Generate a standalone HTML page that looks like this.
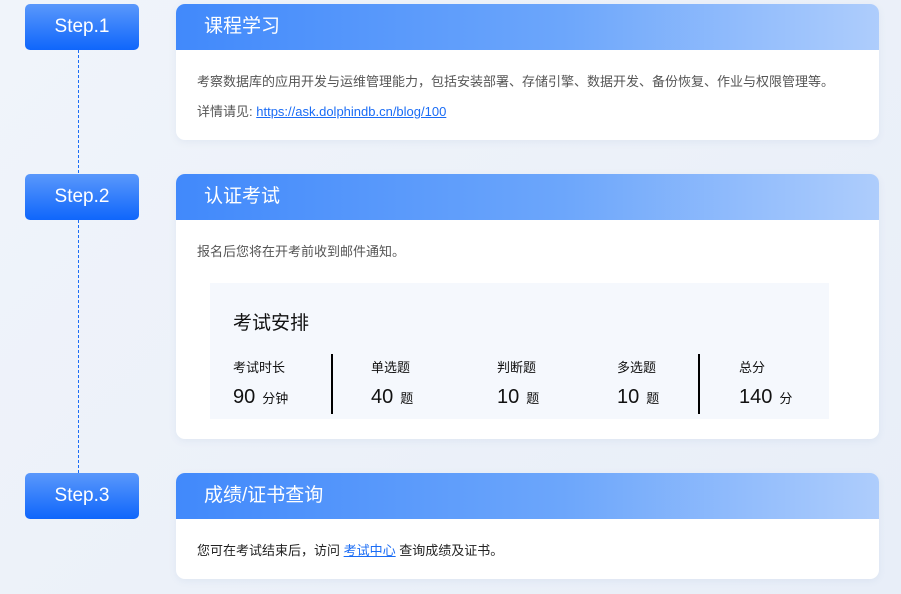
<!DOCTYPE html>
<html><head><meta charset="utf-8"><style>
*{margin:0;padding:0;box-sizing:border-box}
body{width:901px;height:594px;overflow:hidden;background:linear-gradient(135deg,#f0f4fa,#e8eef8);font-family:"Liberation Sans","Noto Sans CJK SC",sans-serif;position:relative}
.step{position:absolute;left:25px;width:114px;height:46px;border-radius:5px;background:linear-gradient(#5a98fb,#0f66fb);color:#fff;font-size:19px;text-align:center;line-height:45px}
.line{position:absolute;left:78px;top:50px;height:423px;border-left:1px dashed #1a6cf5}
.card{position:absolute;left:176px;width:703px;background:#fff;border-radius:9px;overflow:hidden;box-shadow:0 2px 8px rgba(80,110,170,.08)}
.hd{height:46px;background:linear-gradient(90deg,#4189fb 0%,#6ca6fb 55%,#aecdfc 100%);color:#fff;font-size:19px;line-height:46px;padding-left:28px}
.t{font-size:13px;color:#555;position:absolute;left:21px}
a{color:#1a6cf5;text-decoration:underline}
.sch{position:absolute;left:34px;top:109px;width:619px;height:136px;background:#f5f8fd}
.c{position:absolute;color:#111}
.lb{font-size:13px;top:74px}
.v{font-size:20px;top:103px}
.v small{font-size:13px;margin-left:7px}
.dv{position:absolute;top:71px;height:60px;border-left:2px solid #000}
</style></head><body>
<div class="line"></div>
<div class="step" style="top:4px">Step.1</div>
<div class="step" style="top:174px">Step.2</div>
<div class="step" style="top:473px">Step.3</div>
<div class="card" style="top:4px;height:136px">
<div class="hd">课程学习</div>
<div class="t" style="top:67px">考察数据库的应用开发与运维管理能力，包括安装部署、存储引擎、数据开发、备份恢复、作业与权限管理等。</div>
<div class="t" style="top:97px">详情请见: <a>https://ask.dolphindb.cn/blog/100</a></div>
</div>
<div class="card" style="top:174px;height:265px">
<div class="hd">认证考试</div>
<div class="t" style="top:67px">报名后您将在开考前收到邮件通知。</div>
<div class="sch">
<div class="c" style="left:23px;top:25px;font-size:19px">考试安排</div>
<div class="c lb" style="left:23px">考试时长</div><div class="c v" style="left:23px">90<small>分钟</small></div>
<div class="dv" style="left:121px"></div>
<div class="c lb" style="left:161px">单选题</div><div class="c v" style="left:161px">40<small>题</small></div>
<div class="c lb" style="left:287px">判断题</div><div class="c v" style="left:287px">10<small>题</small></div>
<div class="c lb" style="left:407px">多选题</div><div class="c v" style="left:407px">10<small>题</small></div>
<div class="dv" style="left:488px"></div>
<div class="c lb" style="left:529px">总分</div><div class="c v" style="left:529px">140<small>分</small></div>
</div>
</div>
<div class="card" style="top:473px;height:106px">
<div class="hd">成绩/证书查询</div>
<div class="t" style="top:67px;color:#222">您可在考试结束后，访问 <a>考试中心</a> 查询成绩及证书。</div>
</div>
</body></html>
